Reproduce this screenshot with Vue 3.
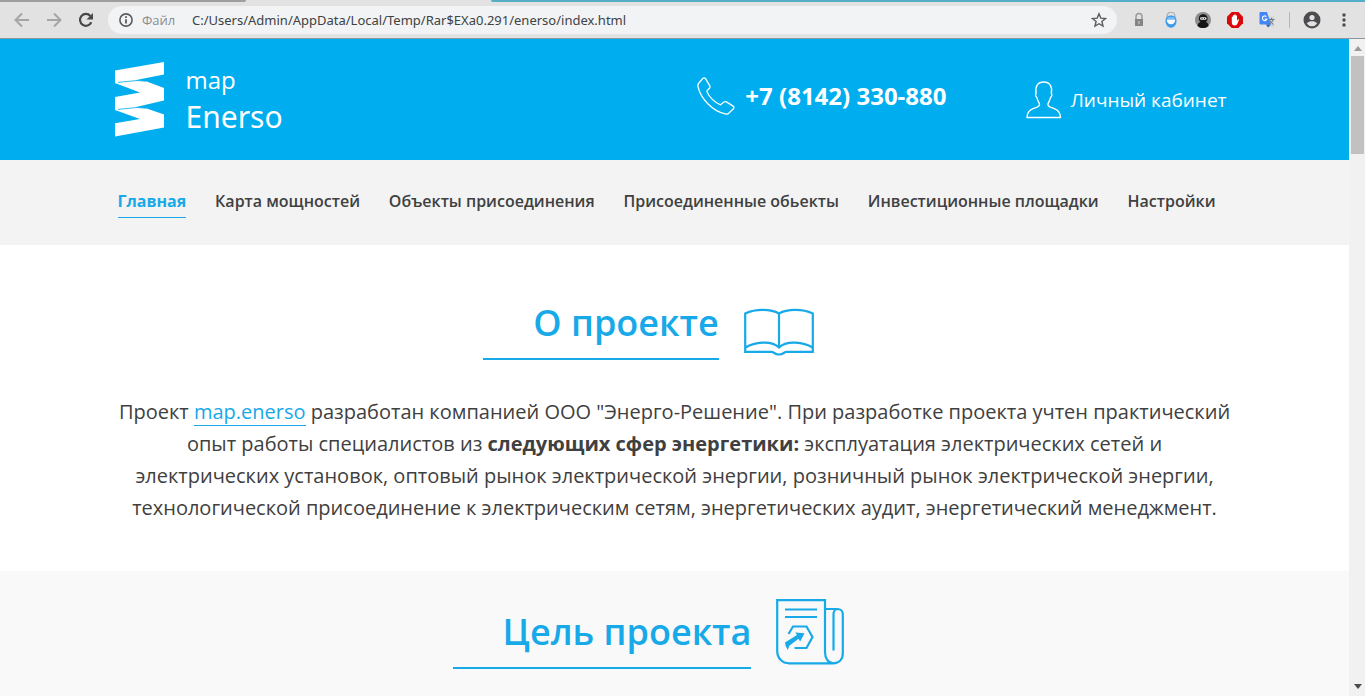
<script setup>
const navItems = [
  'Главная',
  'Карта мощностей',
  'Объекты присоединения',
  'Присоединенные обьекты',
  'Инвестиционные площадки',
  'Настройки',
]
</script>

<template>
  <div class="window">
    <div class="tabs"><span class="tab-left"></span><span class="tab-active"></span><span class="tab-right"></span></div>
    <div class="toolbar">
      <button class="tool" aria-label="Назад">
        <svg width="16" height="16" viewBox="0 0 16 16" fill="none" stroke="#a5a5a5" stroke-width="2"><path d="M15 8H2M8 1.5 1.5 8 8 14.5" /></svg>
      </button>
      <button class="tool" aria-label="Вперёд">
        <svg width="16" height="16" viewBox="0 0 16 16" fill="none" stroke="#a5a5a5" stroke-width="2"><path d="M1 8h13M8 1.5 14.5 8 8 14.5" /></svg>
      </button>
      <button class="tool" aria-label="Обновить">
        <svg width="16" height="16" viewBox="0 0 16 16"><path d="M13.3 10.3A5.9 5.9 0 1 1 12.4 4" fill="none" stroke="#484848" stroke-width="2.2" /><path d="M15 1v6.5H8.5z" fill="#484848" /></svg>
      </button>
      <div class="address">
        <svg width="14" height="14" viewBox="0 0 14 14"><circle cx="7" cy="7" r="6.1" fill="none" stroke="#5a5d60" stroke-width="1.6" /><path d="M6.1 6.2h1.8v4.3H6.1zM6.1 3.3h1.8v1.7H6.1z" fill="#5a5d60" /></svg>
        <label class="scheme" for="url">Файл</label>
        <input id="url" class="url" value="C:/Users/Admin/AppData/Local/Temp/Rar$EXa0.291/enerso/index.html" />
        <button class="star" aria-label="Добавить в закладки">
          <svg width="16" height="16" viewBox="0 0 16 16"><path d="m8 1.8 1.8 4.3 4.7.4-3.6 3 1.1 4.6L8 11.7l-4 2.4 1.1-4.6-3.6-3 4.7-.4z" fill="none" stroke="#5a5d60" stroke-width="1.4" /></svg>
        </button>
      </div>
      <div class="extensions">
        <button class="tool" aria-label="Замок">
          <svg width="16" height="16" viewBox="0 0 16 16"><path d="M5 7V4.5a3 3 0 0 1 6 0V7" fill="none" stroke="#9b9b9b" stroke-width="1.5" /><path d="M4 7h8v7H4z" fill="#858585" /><path d="M7.3 9h1.4v3.2H7.3z" fill="#bdbdbd" /></svg>
        </button>
        <button class="tool" aria-label="VPN">
          <svg width="16" height="16" viewBox="0 0 16 16"><path d="M4 6V4.200a4 4 0 0 1 8 0V6" fill="none" stroke="#a9a9a9" stroke-width="1.200" /><path d="M8 3.500c3.700 0 5.500 2.200 5.500 5.500S11.500 15.700 8 15.700 2.500 12.300 2.500 9 4.300 3.500 8 3.500z" fill="#3d9be9" /><path d="M3.800 7.500h8.400c0 3.200-1.500 4.700-4.200 4.700s-4.200-1.500-4.200-4.700z" fill="#f4faff" /><path d="M4.500 5.500h7v1h-7z" fill="#a8dcff" /></svg>
        </button>
        <button class="tool" aria-label="Ниндзя">
          <svg width="16" height="16" viewBox="0 0 16 16"><circle cx="8" cy="8" r="8" fill="#8c8c8c" /><path d="M2.500 14c.2-2.500 1.500-3.500 3-4A4 4 0 0 1 3.800 6.500C3.800 4 5.600 2.300 8.200 2.300s4.400 1.700 4.400 4.200c0 1.600-.7 2.800-1.800 3.500 1.500.5 2.800 1.800 2.700 4A8 8 0 0 1 2.500 14z" fill="#151515" /><rect x="5" y="5.200" width="6.500" height="2.600" rx="1.300" fill="#ededed" /><path d="M6.500 6h1v1h-1zM9 6h1v1H9z" fill="#222" /></svg>
        </button>
        <button class="tool" aria-label="Блокировщик">
          <svg width="16" height="16" viewBox="0 0 16 16"><path d="M4.700 0h6.600L16 4.700v6.600L11.300 16H4.700L0 11.300V4.700z" fill="#d9090c" /><path d="M4.800 9V5c0-.8 1.200-.8 1.200 0V3.600c0-.9 1.300-.9 1.300 0V3c0-.9 1.400-.9 1.400 0v.8c0-.9 1.300-.9 1.300 0V9l.7-1.300c.5-.8 1.500-.4 1.200.4l-1.500 3.700c-.5 1.200-1.300 1.700-2.600 1.700-2 0-3-1-3-3z" fill="#fff" /></svg>
        </button>
        <button class="tool" aria-label="Переводчик">
          <svg width="16" height="16" viewBox="0 0 16 16"><path d="M6.500 4.500H15v10.300H9z" fill="#cfd3d8" /><path d="M1 0h7l4 12.500H1.500L.5 12V.8z" fill="#4285f4" /><path d="M7 12.500h4.800L9 15.500z" fill="#2458bd" /><path d="M7.300 4.600A2.300 2.300 0 1 0 7.900 7H5.700" fill="none" stroke="#fff" stroke-width="1.200" /><path d="M10 7.500h5.500M12.500 6v1.500M14 7.500c-.5 2-1.700 3.500-3.200 4.500M11 8.500c.8 1.700 2 3 3.500 4" fill="none" stroke="#6d7985" stroke-width="1" /></svg>
        </button>
      </div>
      <span class="divider"></span>
      <button class="tool profile" aria-label="Профиль">
        <svg width="18" height="18" viewBox="0 0 18 18"><circle cx="9" cy="9" r="8.500" fill="#4a4c4f" /><circle cx="9" cy="6.500" r="2.600" fill="#e2e2e2" /><path d="M3.800 12.500c1-1.700 3.500-2.200 5.200-2.200s4.200.5 5.200 2.200A6.200 6.200 0 0 1 9 15.200a6.200 6.200 0 0 1-5.200-2.700z" fill="#e2e2e2" /></svg>
      </button>
      <button class="tool more" aria-label="Меню">
        <svg width="4" height="14" viewBox="0 0 4 14" fill="#4a4c4f"><circle cx="2" cy="2" r="1.700" /><circle cx="2" cy="7" r="1.700" /><circle cx="2" cy="12" r="1.700" /></svg>
      </button>
    </div>

    <div class="viewport">
      <div class="page">
        <header class="header">
          <div class="container header-row">
            <a class="logo" href="#">
              <svg width="50" height="75" viewBox="0 0 50 75"><path d="M0 8.500 49 0v12.500L20 18.200l11 1L49 26v12.500L20 45.200l11 1L49 52.500v13L0 74.500V61.300L25 57 0 48V35l25-4.500L0 21z" fill="#fff" /><path d="M3 20.400 22 18.500l9 .7M3 47.400l19-1.900 9 .7" fill="none" stroke="#00aeef" stroke-width=".8" /></svg>
              <span class="logo-text"><span class="logo-map">map</span><span class="logo-name">Enerso</span></span>
            </a>
            <a class="phone" href="tel:+78142330880">
              <svg width="38" height="38" viewBox="0 0 38 38" fill="none" stroke="#fff" stroke-width="1.300" stroke-linejoin="round"><path d="M1.500 6.500 5.800 1.400c.9-.9 2-.8 2.700.2l4.300 7.200c.5.900.3 1.700-.4 2.400l-2.600 2.900c1.800 5.500 7.600 11.400 13.700 13.700l3.400-2.700c.8-.6 1.600-.7 2.500-.2l6.700 4.200c1 .7 1.100 1.800.3 2.700L32 36c-1 1-2.300 1.200-3.700.9C15.600 34.300 3.500 21.500 1 9.600c-.2-1.200-.2-2.200.5-3.100z" /></svg>
              <span>+7 (8142) 330-880</span>
            </a>
            <a class="account" href="#">
              <svg width="36" height="38" viewBox="0 0 36 38" fill="none" stroke="#fff" stroke-width="1.400" stroke-linejoin="round"><path d="M1 36.500c.2-4.500 1.500-6.700 5-8.300 3.500-1.700 7.300-2.300 7.500-4.500.1-1.800-2-3.700-2.600-7.200-1.300-.8-1.800-3.300-.8-4.300C9 5.500 11.500 1 17.700 1s8.800 4.500 7.600 11.200c1 1 .5 3.500-.8 4.300-.6 3.500-2.700 5.400-2.600 7.200.2 2.200 4 2.800 7.500 4.500 3.500 1.600 4.900 3.800 5.100 8.300z" /></svg>
              <span>Личный кабинет</span>
            </a>
          </div>
        </header>

        <nav class="nav">
          <div class="container nav-row">
            <a v-for="(item, i) in navItems" :key="item" href="#" class="nav-link" :class="{ active: i === 0 }">{{ item }}</a>
          </div>
        </nav>

        <section class="section about">
          <div class="title">
            <h2>О проекте</h2>
            <svg width="70" height="48" viewBox="0 0 70 48" fill="none" stroke="#17a9e8" stroke-width="2.200" stroke-linejoin="miter"><path d="M35 5.500C27 1 12 .5 1.200 5.500v38.300h26.500c2 0 2.800 2.700 7.300 2.700s5.300-2.700 7.300-2.700h26.500V5.500C58 .5 43 1 35 5.500zM35 5.500v34M1.500 39.500C10 34.500 27 31.500 35 39.500c8-8 25-5 33.500 0" /></svg>
          </div>
          <p class="container text">
            Проект <a href="#">map.enerso</a> разработан компанией ООО "Энерго-Решение". При разработке проекта учтен практический опыт работы специалистов из <b>следующих сфер энергетики:</b> эксплуатация электрических сетей и электрических установок, оптовый рынок электрической энергии, розничный рынок электрической энергии, технологической присоединение к электрическим сетям, энергетических аудит, энергетический менеджмент.
          </p>
        </section>

        <section class="section goal">
          <div class="title">
            <h2>Цель проекта</h2>
            <svg width="68" height="66" viewBox="0 0 68 66" fill="none" stroke="#17a9e8" stroke-width="2.200"><path d="M49 10V1.200H1.200V52c0 7 5 12.300 12 12.300h44c6 0 9.600-4 9.600-10V15c0-3-2.500-5-5.500-5H49v43c0 6 3 11.300 8.500 11.300M57.500 51.500V15c0-3 2-5 4.500-5" /><path d="M9 10.500h32M9 18h32M12.500 35l4.500-7.500h13.500L36.500 38l-6 11h-12" /><path d="M9 43.500 21 36l-1.800-2.500 9.300.8-4.300 8.200-1.700-2.800-9.200 7-1.500 4.300-2.200-4.300z" fill="#17a9e8" stroke="none" /></svg>
          </div>
        </section>
      </div>
      <div class="scrollbar">
        <svg width="8" height="5" viewBox="0 0 8 5"><path d="M0 5 4 0l4 5z" fill="#9a9a9a" /></svg>
        <div class="thumb"></div>
        <svg class="down" width="8" height="5" viewBox="0 0 8 5"><path d="M0 0h8L4 5z" fill="#4d4d4d" /></svg>
      </div>
    </div>
  </div>
</template>

<style>
body {
  overflow: hidden;
}
</style>

<style scoped>
.window {
  height: 100vh;
  display: flex;
  flex-direction: column;
  font-family: "Open Sans", "Noto Sans", sans-serif;
  color: #404040;
}
.window * {
  box-sizing: border-box;
}
svg {
  display: block;
  flex: none;
}
button {
  border: 0;
  padding: 0;
  background: none;
}
a {
  color: inherit;
  text-decoration: none;
}
.tabs {
  display: flex;
  height: 2px;
  flex: none;
  background: #e2e2e2;
}
.tab-left {
  width: 18%;
  background: #9e9e9e;
  border-bottom-right-radius: 4px;
}
.tab-active {
  width: 18%;
}
.tab-right {
  flex: 1;
  background: #56aec6;
  border-bottom-left-radius: 4px;
}
.toolbar {
  display: flex;
  align-items: center;
  flex: none;
  height: 37px;
  padding: 0 16px 0 14px;
  background: #e2e2e2;
  border-bottom: 1px solid #8b999f;
}
.tool {
  margin-right: 16px;
}
.address {
  flex: 1;
  display: flex;
  align-items: center;
  height: 28px;
  margin-right: 14px;
  margin-left: -2px;
  padding: 0 10px 0 11px;
  border-radius: 14px;
  background: #f1f3f4;
}
.scheme {
  margin-left: 9px;
  width: 50px;
  font-size: 13px;
  color: #8b8e91;
}
.url {
  flex: 1;
  min-width: 0;
  padding: 0;
  border: 0;
  background: none;
  font-family: "Noto Sans", sans-serif;
  font-size: 13px;
  color: #404244;
}
.extensions {
  display: flex;
}
.divider {
  width: 1px;
  height: 16px;
  background: #b5b5b5;
  margin: 0 13px 0 -2px;
}
.more {
  margin: 0 3px 0 5px;
}
.viewport {
  flex: 1;
  min-height: 0;
  display: flex;
}
.page {
  flex: 1;
  min-width: 0;
  overflow: hidden;
  background: #f9f9f9;
}
.scrollbar {
  width: 16px;
  padding: 7px 1px 7px 2px;
  display: flex;
  flex-direction: column;
  align-items: center;
  background: #f1f1f1;
}
.thumb {
  width: 100%;
  height: 98px;
  margin-top: 5px;
  background: #c1c1c1;
}
.down {
  margin-top: auto;
}
.container {
  max-width: 1120px;
  margin: 0 auto;
}
.header {
  background: #00aeef;
  color: #fff;
}
.header-row {
  display: flex;
  align-items: flex-start;
  height: 121px;
  padding-top: 23px;
}
.logo {
  display: flex;
}
.logo-text {
  display: flex;
  flex-direction: column;
  margin-left: 21px;
}
.logo-map {
  font-size: 24px;
  line-height: 36px;
}
.logo-name {
  font-family: "Noto Sans", sans-serif;
  font-size: 30px;
  line-height: 38px;
}
.phone {
  display: flex;
  align-items: center;
  gap: 10px;
  margin: 15px 79px 0 auto;
  font-size: 24px;
  line-height: 38px;
  font-weight: 700;
}
.account {
  display: flex;
  align-items: center;
  gap: 9px;
  margin: 19px 8px 0 0;
  font-size: 19px;
  line-height: 38px;
}
.nav {
  background: #f3f3f3;
}
.nav-row {
  display: flex;
  justify-content: space-between;
  height: 85px;
  padding: 26px 19px 0 3px;
}
.nav-link {
  height: 32px;
  font-size: 16px;
  line-height: 30px;
  font-weight: 600;
  white-space: nowrap;
}
.nav-link.active {
  color: #17a9e8;
  font-weight: 700;
  border-bottom: 1px solid #17a9e8;
}
.section {
  overflow: hidden;
}
.about {
  background: #fff;
  padding: 49px 0 47px;
}
.goal {
  padding: 27px 0;
}
.title {
  display: flex;
  justify-content: center;
  align-items: flex-end;
  gap: 25px;
  padding-right: 52px;
}
h2 {
  margin: 0;
  padding: 0 0 8px 50px;
  border-bottom: 2px solid #17a9e8;
  color: #17a9e8;
  font-size: 36px;
  line-height: 54px;
  font-weight: 600;
}
.about .title {
  height: 66px;
}
.goal .title {
  height: 71px;
}
.title svg {
  margin-bottom: 4px;
}
.text {
  margin-top: 36px;
  font-size: 20px;
  line-height: 32px;
  text-align: center;
}
.text a {
  color: #17a9e8;
  border-bottom: 1px solid #17a9e8;
}
</style>
